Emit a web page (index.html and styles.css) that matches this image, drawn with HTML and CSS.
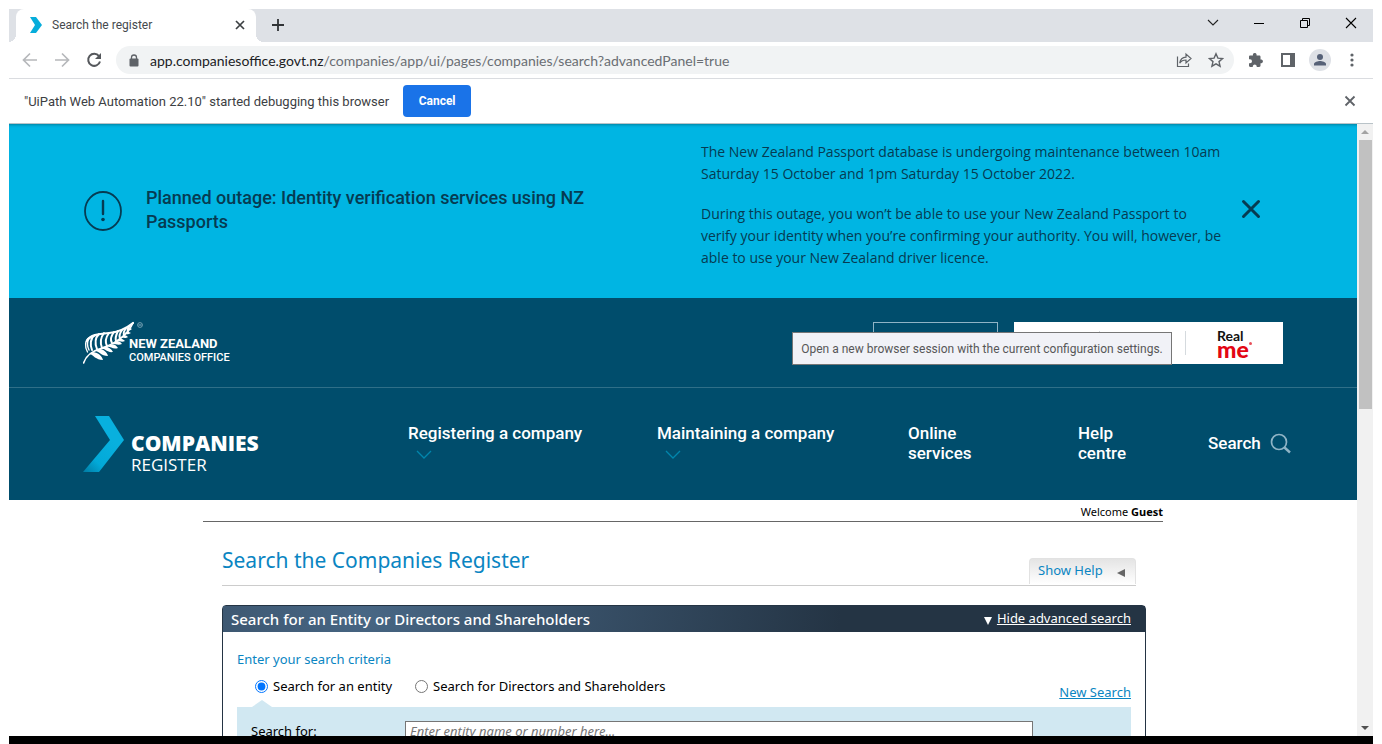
FILE: index.html
```html
<!DOCTYPE html>
<html lang="en">
<head>
<meta charset="utf-8">
<title>Search the register</title>
<link rel="stylesheet" href="styles.css">
</head>
<body>
<div class="window">
  <div class="tabstrip">
    <div class="tab">
      <svg class="favicon" viewBox="0 0 14 18" width="14" height="18"><path d="M1 1h6l6 8-6 8H1l5-8z" fill="#06addb"/></svg>
      <span class="tab-title">Search the register</span>
      <button class="icon-btn" aria-label="Close tab"><svg width="10" height="10" viewBox="0 0 10 10"><path d="M1 1l8 8M9 1L1 9" stroke="#3c4043" stroke-width="1.7"/></svg></button>
    </div>
    <button class="icon-btn new-tab" aria-label="New tab"><svg width="12" height="12" viewBox="0 0 12 12"><path d="M6 0v12M0 6h12" stroke="#303336" stroke-width="1.8"/></svg></button>
    <div class="window-controls">
      <button class="icon-btn" aria-label="Search tabs"><svg width="12" height="12" viewBox="0 0 12 12"><path d="M1 3l5 5 5-5" fill="none" stroke="#222" stroke-width="1.1"/></svg></button>
      <button class="icon-btn" aria-label="Minimize"><svg width="12" height="12" viewBox="0 0 12 12"><path d="M1 6.500h10" stroke="#000"/></svg></button>
      <button class="icon-btn" aria-label="Restore"><svg width="12" height="12" viewBox="0 0 12 12"><path d="M1.500 3.500h7v7h-7zM3.500 3.500v-2h7v7h-2" fill="none" stroke="#000"/></svg></button>
      <button class="icon-btn" aria-label="Close window"><svg width="12" height="12" viewBox="0 0 12 12"><path d="M1 1l10 10M11 1L1 11" stroke="#000" stroke-width="1.1"/></svg></button>
    </div>
  </div>

  <div class="toolbar">
    <button class="icon-btn" aria-label="Back"><svg width="16" height="16" viewBox="0 0 16 16"><path d="M15 8H2M8 1.500L1.500 8 8 14.500" fill="none" stroke="#b6b8bb" stroke-width="1.700"/></svg></button>
    <button class="icon-btn" aria-label="Forward"><svg width="16" height="16" viewBox="0 0 16 16"><path d="M1 8h13M8 1.500L14.500 8 8 14.500" fill="none" stroke="#b6b8bb" stroke-width="1.700"/></svg></button>
    <button class="icon-btn" aria-label="Reload"><svg width="16" height="16" viewBox="0 0 16 16"><path d="M13 4.200A6 6 0 1 0 14 9.500" fill="none" stroke="#55585c" stroke-width="2"/><path d="M15 1v6H9z" fill="#55585c"/></svg></button>
    <div class="address">
      <svg width="10" height="13" viewBox="0 0 10 13"><rect x="0.500" y="4.500" width="9" height="8" rx="1" fill="#5f6368"/><path d="M2.500 5V3.500a2.500 2.500 0 0 1 5 0V5" fill="none" stroke="#5f6368" stroke-width="1.300"/></svg>
      <span class="url"><span class="url-host">app.companiesoffice.govt.nz</span>/companies/app/ui/pages/companies/search?advancedPanel=true</span>
      <button class="icon-btn" aria-label="Share"><svg width="16" height="16" viewBox="0 0 16 16"><path d="M1.500 4.500v10h11v-3M10 5.200V2l5 4.500L10 11V8C7 8 5.200 8.800 3.700 11.200 4.200 8 6 5.500 10 5.200z" fill="none" stroke="#5f6368" stroke-width="1.200"/></svg></button>
      <button class="icon-btn" aria-label="Bookmark"><svg width="16" height="16" viewBox="0 0 16 16"><path d="M8 1.800l1.900 4.300 4.700.4-3.600 3.100 1.100 4.600L8 11.800l-4.100 2.400L5 9.600 1.400 6.500l4.700-.4z" fill="none" stroke="#5f6368" stroke-width="1.400"/></svg></button>
    </div>
    <div class="tools">
      <button class="icon-btn" aria-label="Extensions"><svg width="16" height="16" viewBox="0 0 16 16"><path d="M13.500 7.500h-1V4.800c0-.8-.6-1.300-1.300-1.300H8.600V2.400a1.900 1.900 0 0 0-3.700 0v1.100H2.300C1.500 3.500 1 4 1 4.800v2.500h1a2 2 0 0 1 0 4H1v2.500c0 .7.500 1.200 1.300 1.200h2.500v-1a2 2 0 0 1 3.900 0v1h2.500c.7 0 1.300-.5 1.300-1.200v-2.600h1a1.900 1.900 0 0 0 0-3.700z" fill="#5f6368"/></svg></button>
      <button class="icon-btn" aria-label="Side panel"><svg width="16" height="16" viewBox="0 0 16 16"><path d="M2 2h12v12H2z" fill="#fff" stroke="#5f6368" stroke-width="2"/><path d="M10 2h4v12h-4z" fill="#5f6368"/></svg></button>
      <button class="icon-btn avatar" aria-label="Profile"><svg width="14" height="14" viewBox="0 0 14 14"><circle cx="7" cy="4" r="3" fill="#566177"/><path d="M1 12.500V11c0-2 4-3 6-3s6 1 6 3v1.500z" fill="#566177"/></svg></button>
      <button class="icon-btn" aria-label="Menu"><svg width="16" height="16" viewBox="0 0 16 16" fill="#5f6368"><circle cx="8" cy="3" r="1.600"/><circle cx="8" cy="8" r="1.600"/><circle cx="8" cy="13" r="1.600"/></svg></button>
    </div>
  </div>

  <div class="infobar">
    <span>"UiPath Web Automation 22.10" started debugging this browser</span>
    <button class="cancel">Cancel</button>
    <button class="icon-btn infobar-close" aria-label="Dismiss"><svg width="12" height="12" viewBox="0 0 12 12"><path d="M1.500 1.500l9 9M10.500 1.500l-9 9" stroke="#5f6368" stroke-width="1.800"/></svg></button>
  </div>

  <div class="viewport">
    <div class="page">
      <section class="alert">
        <svg width="38" height="40" viewBox="0 0 38 40"><ellipse cx="19" cy="20" rx="18" ry="19" fill="none" stroke="#063b52" stroke-width="1.800"/><path d="M19 10v13" stroke="#063b52" stroke-width="2.400" stroke-linecap="round"/><circle cx="19" cy="28.500" r="1.800" fill="#063b52"/></svg>
        <h2 class="alert-title">Planned outage: Identity verification services using NZ<br>Passports</h2>
        <div class="alert-message">
          <p>The New Zealand Passport database is undergoing maintenance between 10am<br>Saturday 15 October and 1pm Saturday 15 October 2022.</p>
          <p>During this outage, you won’t be able to use your New Zealand Passport to<br>verify your identity when you’re confirming your authority. You will, however, be<br>able to use your New Zealand driver licence.</p>
        </div>
        <button class="icon-btn alert-close" aria-label="Close notice"><svg width="20" height="20" viewBox="0 0 20 20"><path d="M2.500 2.500l15 15M17.500 2.500l-15 15" stroke="#063b52" stroke-width="3" stroke-linecap="round"/></svg></button>
      </section>

      <header class="office-bar">
        <a class="office-logo" href="#">
          <svg width="64" height="44" viewBox="0 0 64 44">
            <g fill="none" stroke="#fff" stroke-linecap="round">
              <path d="M.6 42C3 34 9 30 19 27 34 22 45 13 50 2" stroke-width="1.600"/>
              <path d="M4.500 31C1.500 26 2 19 6 17c-2 4-2 8 0 12" stroke-width="1.400"/>
              <path d="M9 29c-2-5-2-12 3-15M14 28c-2-5-2-11 2-15M19 27c-2-5-1-11 2-15M24 25c-2-4-1-9 2-13M29 22c-2-3-1-7 2-11M33 20c-1-3 0-6 2-10M37 17c-1-2 0-5 2-8M41 14c-1-2 0-4 2-7M45 10c-1-1 0-3 2-5" stroke-width="2"/>
              <path d="M4 20c3-6 11-7 22-8C37 11 45 6 50 2" stroke-width="2.200"/>
            </g>
            <g fill="#fff">
              <path d="M7 33c3 1 6 6 13 6-1-4-5-8-11-8z"/>
              <path d="M12 30c4 0 6 5 13 5-1-4-6-8-11-7z"/>
              <path d="M18 28c4-1 6 4 12 3-2-4-6-6-10-5z"/>
              <path d="M24 26c3-1 6 3 11 1-2-3-5-5-8-3z"/>
              <path d="M29 23c3-1 5 2 10 0-2-3-5-4-8-2z"/>
              <path d="M33 20c3-1 5 2 9 0-2-2-5-4-7-2z"/>
              <path d="M37 17c3-1 5 1 8-1-2-2-4-3-6-1z"/>
              <path d="M41 13c2 0 4 1 7-1-2-1-4-2-5-1z"/>
              <path d="M44 10c2-1 3 0 5-2-1-1-3-1-4 0z"/>
            </g>
            <circle cx="57" cy="4" r="2.400" fill="none" stroke="#8fb2c2" stroke-width=".8"/><path d="M55.500 4h3" stroke="#8fb2c2"/>
          </svg>
          <span class="office-name"><span class="office-nz">NEW ZEALAND</span><span class="office-co">COMPANIES OFFICE</span></span>
        </a>
        <div class="account">
          <button class="account-btn" aria-label="Account"></button>
          <a class="realme" href="#">
            <span class="realme-cell"></span>
            <span class="realme-cell"></span>
            <span class="realme-logo"><span class="real">Real</span><span class="me">me<span class="reg"></span></span></span>
          </a>
        </div>
        <div class="tooltip" role="tooltip">Open a new browser session with the current configuration settings.</div>
      </header>

      <nav class="main-nav">
        <a class="brand" href="#">
          <svg width="42" height="56" viewBox="0 0 42 56"><defs><linearGradient id="g" x1="0" y1="1" x2=".5" y2=".3"><stop offset="0" stop-color="#007ba3"/><stop offset=".4" stop-color="#02a9d8"/><stop offset="1" stop-color="#08b0de"/></linearGradient></defs><path d="M12 0h14l15 24-25 32H0l27-32z" fill="url(#g)"/></svg>
          <span class="brand-text"><span class="brand-top">COMPANIES</span><span class="brand-sub">REGISTER</span></span>
        </a>
        <a class="nav-link" href="#">Registering a company<svg width="16" height="10" viewBox="0 0 16 10"><path d="M1 1l7 7 7-7" fill="none" stroke="#0086ad" stroke-width="1.300"/></svg></a>
        <a class="nav-link" href="#">Maintaining a company<svg width="16" height="10" viewBox="0 0 16 10"><path d="M1 1l7 7 7-7" fill="none" stroke="#0086ad" stroke-width="1.300"/></svg></a>
        <a class="nav-link" href="#">Online<br>services</a>
        <a class="nav-link" href="#">Help<br>centre</a>
        <a class="nav-search" href="#">Search<svg width="21" height="21" viewBox="0 0 21 21"><circle cx="9" cy="9" r="7.500" fill="none" stroke="#8fb4c6" stroke-width="1.700"/><path d="M14.500 14.500l5.500 5" stroke="#8fb4c6" stroke-width="2.400"/></svg></a>
      </nav>

      <main class="content">
        <div class="welcome">Welcome <b>Guest</b></div>
        <div class="inner">
          <div class="title-row">
            <h1>Search the Companies Register</h1>
            <button class="help">Show Help<svg width="8" height="8" viewBox="0 0 8 8"><path d="M8 0v8L0 4z" fill="#666"/></svg></button>
          </div>
          <section class="panel">
            <div class="panel-head">
              <h2>Search for an Entity or Directors and Shareholders</h2>
              <a class="toggle" href="#"><svg width="8" height="8" viewBox="0 0 8 8"><path d="M0 0h8L4 8z" fill="#fff"/></svg><span>Hide advanced search</span></a>
            </div>
            <form class="panel-body">
              <h3>Enter your search criteria</h3>
              <div class="choices">
                <label><input type="radio" name="kind" checked>Search for an entity</label>
                <label><input type="radio" name="kind">Search for Directors and Shareholders</label>
                <a href="#">New Search</a>
              </div>
              <div class="criteria">
                <label for="q">Search for:</label>
                <input id="q" type="text" placeholder="Enter entity name or number here...">
              </div>
            </form>
          </section>
        </div>
      </main>
    </div>
    <div class="scrollbar">
      <svg width="16" height="16" viewBox="0 0 16 16"><path d="M4 10h8L8 6z" fill="#a3a3a3"/></svg>
      <div class="thumb"></div>
      <svg width="16" height="16" viewBox="0 0 16 16"><path d="M4 6h8l-4 4z" fill="#505050"/></svg>
    </div>
  </div>
</div>
</body>
</html>
```
FILE: styles.css
```css
* { box-sizing: border-box; }
body {
  margin: 0;
  background: #fff;
  font-family: "Noto Sans", sans-serif;
}
h1, h2, h3, p { margin: 0; font-weight: 400; }
button { font-family: inherit; }
svg { display: block; flex: none; }

.window {
  height: 100vh;
  margin: 0 9px;
  padding-top: 9px;
  border-bottom: 8px solid #000;
  display: flex;
  flex-direction: column;
  overflow: hidden;
}
.icon-btn {
  border: 0;
  padding: 0;
  background: none;
  display: flex;
  align-items: center;
  justify-content: center;
  flex: none;
}

/* Browser chrome */
.tabstrip {
  height: 33px;
  flex: none;
  display: flex;
  align-items: center;
  background: #dee1e6;
  padding-left: 7px;
}
.tab {
  position: relative;
  width: 240px;
  height: 33px;
  padding: 0 11px 2px 13px;
  display: flex;
  align-items: center;
  gap: 9px;
  background: #fff;
  border-radius: 8px 8px 0 0;
}
.tab::before,
.tab::after {
  content: "";
  position: absolute;
  bottom: 0;
  width: 8px;
  height: 8px;
}
.tab::before { right: 100%; background: radial-gradient(circle at 0 0, transparent 8px, #fff 8px); }
.tab::after { left: 100%; background: radial-gradient(circle at 100% 0, transparent 8px, #fff 8px); }
.tab-title {
  flex: 1;
  font: 12px Roboto, sans-serif;
  color: #45494d;
}
.new-tab {
  margin-left: 16px;
  padding-bottom: 2px;
}
.window-controls {
  margin-left: auto;
  padding: 0 16px 6px 0;
  display: flex;
  gap: 34px;
}
.toolbar {
  height: 37px;
  flex: none;
  display: flex;
  align-items: center;
  gap: 16px;
  padding: 0 13px;
  border-bottom: 1px solid #dadce0;
}
.address {
  flex: 1;
  height: 28px;
  padding: 0 10px 0 13px;
  border-radius: 14px;
  background: #f1f3f4;
  display: flex;
  align-items: center;
  gap: 16px;
  margin-left: -2px;
}
.url {
  flex: 1;
  margin-left: -5px;
  font: 14px Lato, sans-serif;
  color: #6a6e73;
  white-space: nowrap;
}
.url-host { color: #202124; }
.tools {
  display: flex;
  align-items: center;
  gap: 16px;
  margin-left: -2px;
}
.avatar {
  width: 22px;
  height: 22px;
  margin: 0 -3px;
  border-radius: 50%;
  background: #dee1e6;
}
.infobar {
  height: 45px;
  flex: none;
  display: flex;
  align-items: center;
  gap: 14px;
  padding: 0 17px 0 15px;
  border-bottom: 1px solid #b9c3c8;
  font: 13px Roboto, sans-serif;
  color: #3c4043;
}
.cancel {
  width: 68px;
  height: 32px;
  border: 0;
  border-radius: 4px;
  background: #1a73e8;
  color: #fff;
  font-size: 12px;
  font-weight: 700;
}
.infobar-close { margin-left: auto; }

/* Viewport */
.viewport {
  flex: 1;
  min-height: 0;
  display: flex;
}
.page {
  flex: 1;
  min-width: 0;
  overflow: hidden;
}
.scrollbar {
  width: 16px;
  flex: none;
  display: flex;
  flex-direction: column;
  background: #f1f1f1;
}
.thumb {
  height: 44%;
  margin: 0 1px auto 2px;
  background: #c1c1c1;
}

/* Outage notice */
.alert {
  min-height: 174px;
  padding: 0 96px 0 75px;
  display: grid;
  grid-template-columns: 38px 1fr 516px 20px;
  gap: 24px;
  align-items: center;
  background: #00b5e3;
  box-shadow: inset 0 3px 3px -2px #027fa0;
  color: #063b52;
}
.alert-title {
  padding-bottom: 2px;
  font-family: Roboto, sans-serif;
  font-size: 18px;
  font-weight: 500;
  line-height: 24px;
  white-space: nowrap;
}
.alert-message {
  padding-bottom: 12px;
  display: grid;
  gap: 18px;
  font-family: "Open Sans", sans-serif;
  font-size: 14px;
  line-height: 22px;
  white-space: nowrap;
}
.alert-close { padding-bottom: 4px; }

/* Office header */
.office-bar {
  position: relative;
  min-height: 90px;
  padding: 0 74px;
  display: flex;
  align-items: center;
  justify-content: space-between;
  background: #004d6c;
  border-bottom: 1px solid #2f6f88;
}
.office-logo {
  display: flex;
  align-items: flex-end;
  color: #fff;
  text-decoration: none;
  font-family: Roboto, sans-serif;
  font-weight: 700;
}
.office-name {
  margin-left: -18px;
  display: flex;
  flex-direction: column;
  line-height: 14px;
}
.office-nz { font-size: 13px; }
.office-co { font-size: 11px; font-weight: 500; }
.account {
  display: flex;
  gap: 16px;
}
.account-btn {
  width: 125px;
  height: 40px;
  border: 1px solid #8fb4c6;
  background: none;
}
.realme {
  width: 269px;
  height: 42px;
  display: flex;
  align-items: center;
  background: #fff;
  text-decoration: none;
}
.realme-cell {
  flex: 1;
  height: 24px;
  border-right: 1px solid #d5dade;
}
.realme-logo {
  width: 97px;
  display: flex;
  flex-direction: column;
  padding-left: 31px;
  font-family: Lato, sans-serif;
}
.real {
  font-size: 14px;
  font-weight: 700;
  line-height: 12px;
  color: #111;
}
.me {
  display: flex;
  font-size: 23px;
  font-weight: 900;
  line-height: 14px;
  color: #e30613;
}
.reg {
  width: 3px;
  height: 3px;
  border-radius: 50%;
  background: #e8505a;
}
.tooltip {
  position: absolute;
  top: 34px;
  right: 185px;
  width: 380px;
  height: 33px;
  border: 1px solid #767676;
  background: #f1f2f7;
  font: 12px/32px Roboto, sans-serif;
  color: #575757;
  text-align: center;
  white-space: nowrap;
}

/* Main navigation */
.main-nav {
  min-height: 112px;
  padding: 0 66px 0 74px;
  display: grid;
  grid-template-columns: 325fr 249fr 251fr 170fr 130fr 83fr;
  align-items: center;
  background: #004d6c;
}
.main-nav a {
  color: #fff;
  text-decoration: none;
}
.brand {
  display: flex;
  gap: 6px;
}
.brand-text {
  display: flex;
  flex-direction: column;
  padding-top: 16px;
  font-family: "Open Sans", sans-serif;
  line-height: 22px;
}
.brand-top { font-size: 21px; font-weight: 800; }
.brand-sub { font-size: 17px; font-weight: 500; }
.main-nav .brand { padding-top: 4px; }
.nav-link,
.nav-search {
  padding-bottom: 2px;
  font-family: Roboto, sans-serif;
  font-size: 17px;
  font-weight: 500;
  line-height: 20px;
  white-space: nowrap;
}
.nav-link { min-height: 42px; }
.nav-link svg { margin: 7px 0 0 8px; }
.nav-search {
  display: flex;
  align-items: center;
  justify-content: space-between;
}

/* Register content */
.content {
  max-width: 960px;
  margin: 0 auto;
}
.welcome {
  border-bottom: 1px solid #666;
  padding: 4px 0 1px;
  font-size: 11px;
  line-height: 16px;
  text-align: right;
  color: #000;
}
.inner { padding: 0 17px 0 19px; }
.title-row {
  min-height: 64px;
  margin-right: 10px;
  padding-bottom: 1px;
  display: flex;
  align-items: flex-end;
  justify-content: space-between;
  border-bottom: 1px solid #ccc;
}
h1 {
  padding-bottom: 10px;
  font-size: 21px;
  line-height: 28px;
  color: #0a85c2;
}
.help {
  width: 107px;
  height: 26px;
  padding: 0 10px 4px 8px;
  display: flex;
  align-items: center;
  justify-content: space-between;
  border: 1px solid #e2e2e2;
  border-bottom: 0;
  border-radius: 4px 4px 0 0;
  background: linear-gradient(#e4e4e4, #fff);
  font-size: 13px;
  color: #0a85c2;
}
.help svg { margin-top: 6px; }
.panel {
  margin-top: 19px;
  border: 1px solid #243444;
  border-radius: 4px 4px 0 0;
}
.panel-head {
  height: 26px;
  padding: 0 14px 0 8px;
  display: flex;
  align-items: center;
  justify-content: space-between;
  background: radial-gradient(ellipse 480px 200px at 15% 30%, #486785, #243444);
  color: #fff;
}
.panel-head h2 {
  font-size: 15px;
  font-weight: 500;
}
.toggle {
  display: flex;
  align-items: center;
  gap: 5px;
  padding-bottom: 2px;
  color: #fff;
  font-size: 13px;
  text-decoration: none;
}
.toggle span { text-decoration: underline; }
.toggle svg { margin-top: 6px; }
.panel-body {
  padding: 18px 14px 0;
  font-size: 13px;
  line-height: 18px;
  color: #000;
}
h3 {
  font-size: 13px;
  line-height: 18px;
  color: #0a85c2;
}
.choices {
  height: 39px;
  padding: 9px 0 0 18px;
  display: flex;
  gap: 23px;
}
.choices label {
  display: flex;
  align-items: center;
  gap: 5px;
  height: 18px;
}
.choices input {
  width: 13px;
  height: 13px;
  margin: 0;
}
.choices a {
  margin: 6px 0 0 auto;
  color: #0a85c2;
}
.criteria {
  position: relative;
  padding: 14px 98px 40px 14px;
  display: grid;
  grid-template-columns: 154px 1fr;
  background: #d1e8f2;
}
.criteria::before {
  content: "";
  position: absolute;
  left: 15px;
  bottom: 100%;
  border: solid transparent;
  border-width: 0 10px 7px;
  border-bottom-color: #d1e8f2;
}
.criteria label { line-height: 20px; }
.criteria input {
  height: 20px;
  padding: 0 4px;
  border: 1px solid #767676;
  font: italic 13px "Noto Sans", sans-serif;
}
.criteria input::placeholder { color: #757575; }
```
